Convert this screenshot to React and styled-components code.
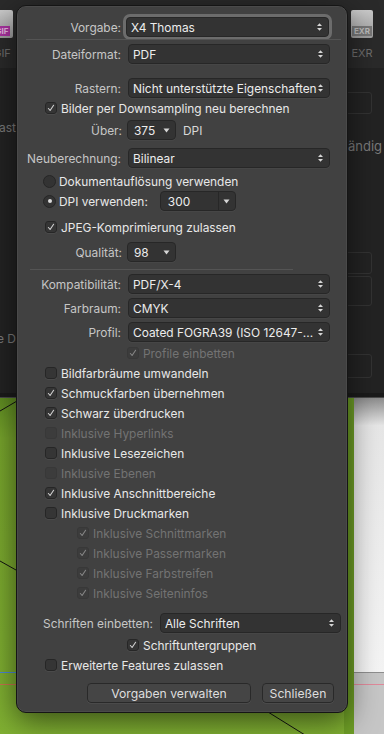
import React from 'react'
import styled, { createGlobalStyle } from 'styled-components'

const Global = createGlobalStyle`
  body {
    margin: 0;
    background: #242424;
    font-family: Inter, "Liberation Sans", sans-serif;
  }
`

const Shell = styled.div`
  position: relative;
  width: 384px;
  height: 734px;
  overflow: hidden;
  display: flex;
  flex-direction: column;
`

const TopStrip = styled.div`
  height: 68px;
  flex: none;
  background: #2a2a2a;
  display: flex;
  justify-content: space-between;
  overflow: hidden;
`

const FileTile = styled.div`
  width: 28px;
  margin-left: ${p => p.$ml || 0}px;
  margin-right: ${p => p.$mr || 0}px;
  padding-top: 10px;
  display: flex;
  flex-direction: column;
  align-items: center;
`

const Paper = styled.div`
  width: 22px;
  height: 28px;
  background: linear-gradient(#c9c9c9, #9d9d9d);
  border-radius: 2px;
  display: flex;
  align-items: flex-end;
  justify-content: center;
  padding-bottom: 2px;
  box-sizing: border-box;
`

const Tag = styled.span`
  font-size: 8px;
  font-weight: 700;
  color: ${p => p.$fg};
  background: ${p => p.$bg};
  padding: 0 2px;
  line-height: 10px;
`

const TileName = styled.span`
  margin-top: 8px;
  font-size: 11px;
  color: #6d6d6d;
`

const Middle = styled.div`
  height: 325px;
  flex: none;
  background: #232323;
  display: grid;
  grid-template-columns: 16px 1fr 36px;
`

const SideCol = styled.div`
  position: relative;
  overflow: hidden;
  display: flex;
  flex-direction: column;
  align-items: ${p => (p.$right ? 'flex-start' : 'flex-end')};
`

const Ghost = styled.span`
  margin-top: ${p => p.$mt}px;
  font-size: ${p => p.$fs || 11}px;
  color: #7a7a7a;
  white-space: nowrap;
`

const GhostBox = styled.div`
  margin-top: ${p => p.$mt}px;
  width: 30px;
  height: ${p => p.$h}px;
  border: 1px solid #333;
  border-radius: 3px;
  margin-left: -8px;
`

const Divider = styled.div`
  height: 4px;
  flex: none;
  background: #1b1b1b;
  border-bottom: 1px solid #4a4a4a;
`

const Canvas = styled.div`
  flex: 1;
  display: flex;
`

const Dialog = styled.div`
  position: absolute;
  left: 16px;
  top: 5px;
  width: 332px;
  height: 708px;
  box-sizing: border-box;
  background: #414141;
  border: 1px solid #151515;
  border-radius: 10px;
  box-shadow: 0 0 0 0.5px #555 inset, 0 8px 30px rgba(0, 0, 0, 0.55);
  display: flex;
  flex-direction: column;
  padding-top: 11px;
  font-size: 11.9px;
  color: #e4e4e4;
`

const Row = styled.div`
  display: flex;
  align-items: center;
  height: 20px;
  flex: none;
  margin-top: ${p => p.$mt || 0}px;
  padding-left: ${p => p.$pl || 0}px;
  padding-right: ${p => p.$pr || 0}px;
  justify-content: ${p => p.$end ? 'flex-end' : 'flex-start'};
`

const Label = styled.span`
  width: ${p => (p.$w ? p.$w + 'px' : 'auto')};
  flex: none;
  text-align: right;
  margin-right: ${p => p.$gap || 7}px;
  color: #c6c6c6;
`

const Select = styled.div`
  width: ${p => p.$w}px;
  height: 20px;
  box-sizing: border-box;
  flex: none;
  margin-left: ${p => p.$ml || 0}px;
  background: #333333;
  border: 1px solid #272727;
  border-radius: 4px;
  box-shadow: ${p => (p.$focus ? '0 0 0 3px #6c6c6c' : '0 0.5px 0 #4d4d4d')};
  display: flex;
  align-items: center;
  padding: 0 5px 0 ${p => p.$pl || 4}px;
  color: #ececec;
  font-size: 11.9px;
  white-space: nowrap;
  overflow: hidden;
`

const SelectText = styled.span`
  flex: 1;
  overflow: hidden;
`

const Split = styled.div`
  width: 16px;
  align-self: stretch;
  margin-right: -5px;
  border-left: 1px solid #272727;
  display: flex;
  align-items: center;
  justify-content: center;
`

const Unit = styled.span`
  margin-left: 7px;
  color: #d8d8d8;
`

const Separator = styled.div`
  height: 1px;
  flex: none;
  background: #545454;
  margin: ${p => p.$mt}px ${p => p.$mr}px 0 ${p => p.$ml}px;
`

const Box = styled.span`
  width: 12px;
  height: 12px;
  box-sizing: border-box;
  flex: none;
  border-radius: 3px;
  background: ${p => (p.$off ? '#3c3c3c' : '#353535')};
  border: 1px solid ${p => (p.$off ? '#383838' : '#262626')};
  box-shadow: 0 0.5px 0 ${p => (p.$off ? 'transparent' : '#555')};
  margin-right: 4px;
  display: flex;
  align-items: center;
  justify-content: center;
`

const Radio = styled.span`
  width: 13px;
  height: 13px;
  box-sizing: border-box;
  flex: none;
  border-radius: 50%;
  background: #333;
  border: 1px solid #262626;
  margin-right: 3px;
  display: flex;
  align-items: center;
  justify-content: center;
`

const Dot = styled.span`
  width: 4px;
  height: 4px;
  border-radius: 50%;
  background: #dcdcdc;
`

const OptionText = styled.span`
  color: ${p => (p.$off ? '#737373' : '#e8e8e8')};
  white-space: nowrap;
`

const Button = styled.div`
  width: ${p => p.$w}px;
  height: 20px;
  box-sizing: border-box;
  flex: none;
  margin-left: ${p => p.$ml || 0}px;
  border: 1px solid #292929;
  border-radius: 4px;
  background: #454545;
  box-shadow: 0 0.5px 0 #555;
  display: flex;
  align-items: center;
  justify-content: center;
  color: #dedede;
  font-size: 12.2px;
`

const Stepper = () => (
  <svg width="7" height="10" viewBox="0 0 7 10">
    <polygon points="1,4 3.5,1.2 6,4" fill="#d6d6d6" />
    <polygon points="1,6 3.5,8.8 6,6" fill="#d6d6d6" />
  </svg>
)

const Caret = () => (
  <svg width="7" height="5" viewBox="0 0 7 5">
    <polygon points="0.5,0.5 6.5,0.5 3.5,4.5" fill="#d6d6d6" />
  </svg>
)

const Tick = ({ off }) => (
  <svg width="10" height="10" viewBox="0 0 10 10">
    <path d="M2.4 5.5 L4.1 7.5 L7.6 2.3" fill="none" stroke={off ? '#858585' : '#cfcfcf'} strokeWidth="1.1" strokeLinecap="round" strokeLinejoin="round" />
  </svg>
)

const Field = ({ label, value, mt, focus }) => (
  <Row $mt={mt}>
    <Label $w={104} $gap={focus ? 5 : 7}>{label}</Label>
    <Select $w={focus ? 203 : 202} $focus={focus}>
      <SelectText>{value}</SelectText>
      <Stepper />
    </Select>
  </Row>
)

const Check = ({ text, on, off, pl = 28, mt }) => (
  <Row $pl={pl} $mt={mt}>
    <Box $off={off}>{on && <Tick off={off} />}</Box>
    <OptionText $off={off}>{text}</OptionText>
  </Row>
)

const Popup = ({ label, value, mt, unit }) => (
  <Row $mt={mt}>
    <Label $w={105} $gap={5}>{label}</Label>
    <Select $w={49} $pl={6}>
      <SelectText>{value}</SelectText>
      <Caret />
    </Select>
    {unit && <Unit>{unit}</Unit>}
  </Row>
)

const CanvasArt = () => (
  <svg width="354" height="337" viewBox="0 0 354 337">
    <defs>
      <linearGradient id="g" x1="0" y1="0" x2="0" y2="1">
        <stop offset="0" stopColor="#5f8c22" />
        <stop offset="0.12" stopColor="#77a42c" />
        <stop offset="1" stopColor="#80b032" />
      </linearGradient>
    </defs>
    <rect width="354" height="337" fill="url(#g)" />
    <rect x="344" width="10" height="337" fill="#6e9e26" />
    <line x1="0" y1="13" x2="17" y2="3" stroke="#111" strokeWidth="1" />
    <line x1="0" y1="163" x2="16" y2="172" stroke="#111" strokeWidth="1" />
    <line x1="268" y1="314" x2="305" y2="337" stroke="#111" strokeWidth="1" />
    <line x1="0" y1="274.5" x2="16" y2="274.5" stroke="#4d86d8" strokeWidth="1" />
    <line x1="0" y1="286.5" x2="16" y2="286.5" stroke="#c9744e" strokeWidth="1" />
  </svg>
)

const PaperArt = () => (
  <svg width="30" height="337" viewBox="0 0 30 337">
    <defs>
      <linearGradient id="p" x1="0" y1="0" x2="0" y2="1">
        <stop offset="0" stopColor="#8c8c8c" />
        <stop offset="0.1" stopColor="#e6e6e6" />
        <stop offset="1" stopColor="#f4f4f4" />
      </linearGradient>
    </defs>
    <rect width="30" height="275" fill="url(#p)" />
    <rect y="275" width="30" height="62" fill="#c6c6c6" />
    <line x1="0" y1="274.5" x2="30" y2="274.5" stroke="#8e8e8e" />
    <line x1="0" y1="286.5" x2="30" y2="286.5" stroke="#e0899a" />
  </svg>
)

const App = () => (
  <Shell>
    <Global />
    <TopStrip>
      <FileTile $ml={-12}>
        <Paper>
          <Tag $bg="#a8329f" $fg="#e3b6df">GIF</Tag>
        </Paper>
        <TileName>GIF</TileName>
      </FileTile>
      <FileTile $mr={8}>
        <Paper>
          <Tag $bg="#777" $fg="#bbb">EXR</Tag>
        </Paper>
        <TileName>EXR</TileName>
      </FileTile>
    </TopStrip>
    <Middle>
      <SideCol>
        <Ghost $mt={52} $fs={12}>Kontrast</Ghost>
        <Ghost $mt={196} $fs={12}>Komplette D</Ghost>
      </SideCol>
      <div />
      <SideCol $right>
        <GhostBox $mt={24} $h={20} />
        <Ghost $mt={24} $fs={13}>ändig</Ghost>
        <GhostBox $mt={98} $h={20} />
        <GhostBox $mt={2} $h={28} />
        <GhostBox $mt={48} $h={22} />
      </SideCol>
    </Middle>
    <Divider />
    <Canvas>
      <CanvasArt />
      <PaperArt />
    </Canvas>

    <Dialog>
      <Field label="Vorgabe:" value="X4 Thomas" focus />
      <Separator $mt={2} $ml={9} $mr={6} />
      <Field label="Dateiformat:" value="PDF" mt={4} />
      <Field label="Rastern:" value="Nicht unterstützte Eigenschaften" mt={14} />
      <Check text="Bilder per Downsampling neu berechnen" on />
      <Popup label="Über:" value="375" unit="DPI" mt={2} />
      <Field label="Neuberechnung:" value="Bilinear" mt={8} />
      <Row $pl={26} $mt={3}>
        <Radio />
        <OptionText>Dokumentauflösung verwenden</OptionText>
      </Row>
      <Row $pl={26}>
        <Radio><Dot /></Radio>
        <OptionText>DPI verwenden:</OptionText>
        <Select $w={76} $pl={7} $ml={12}>
          <SelectText>300</SelectText>
          <Split><Caret /></Split>
        </Select>
      </Row>
      <Check text="JPEG-Komprimierung zulassen" on mt={6} />
      <Popup label="Qualität:" value="98" mt={5} />
      <Separator $mt={7} $ml={13} $mr={54} />
      <Field label="Kompatibilität:" value="PDF/X-4" mt={4} />
      <Field label="Farbraum:" value="CMYK" mt={4} />
      <Field label="Profil:" value="Coated FOGRA39 (ISO 12647-..." mt={4} />
      <Check text="Profile einbetten" on off pl={110} mt={1} />
      <Check text="Bildfarbräume umwandeln" />
      <Check text="Schmuckfarben übernehmen" on />
      <Check text="Schwarz überdrucken" on />
      <Check text="Inklusive Hyperlinks" off />
      <Check text="Inklusive Lesezeichen" />
      <Check text="Inklusive Ebenen" off />
      <Check text="Inklusive Anschnittbereiche" on />
      <Check text="Inklusive Druckmarken" />
      <Check text="Inklusive Schnittmarken" on off pl={60} />
      <Check text="Inklusive Passermarken" on off pl={60} />
      <Check text="Inklusive Farbstreifen" on off pl={60} />
      <Check text="Inklusive Seiteninfos" on off pl={60} />
      <Row $pl={26} $mt={10}>
        <Label $gap={7}>Schriften einbetten:</Label>
        <Select $w={181}>
          <SelectText>Alle Schriften</SelectText>
          <Stepper />
        </Select>
      </Row>
      <Check text="Schriftuntergruppen" on pl={110} mt={2} />
      <Check text="Erweiterte Features zulassen" />
      <Row $mt={8} $pr={13} $end>
        <Button $w={164}>Vorgaben verwalten</Button>
        <Button $w={72} $ml={11}>Schließen</Button>
      </Row>
    </Dialog>
  </Shell>
)

export default App
